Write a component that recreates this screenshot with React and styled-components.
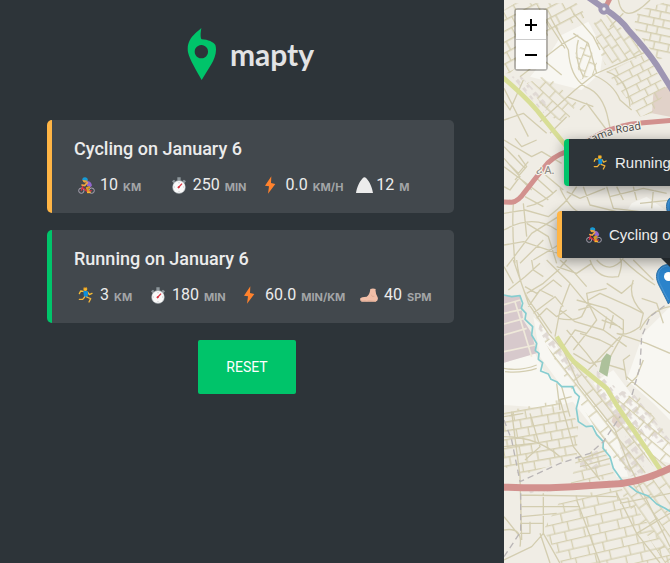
import React from 'react';
import styled, { createGlobalStyle } from 'styled-components';

const GlobalStyle = createGlobalStyle`
  * { box-sizing: border-box; margin: 0; padding: 0; }
  body { font-family: Roboto, "Noto Sans", sans-serif; color: #ececec; background: #2d3439; }
`;

const Page = styled.div`
  display: flex;
  min-height: 100vh;
`;

const Sidebar = styled.aside`
  flex: 0 0 504px;
  padding: 28px 50px 40px 47px;
  background: #2d3439;
`;

const Brand = styled.header`
  display: flex;
  justify-content: center;
  align-items: center;
  gap: 13px;
  height: 52px;
  margin-bottom: 40px;
`;

const BrandName = styled.h1`
  font: 700 30px/36px Lato, sans-serif;
  color: #e2e3e4;
`;

const WorkoutList = styled.ul`
  display: grid;
  gap: 17px;
  list-style: none;
`;

const Workout = styled.li`
  padding: 16px 18px 15px 22px;
  border-left: 5px solid ${(p) => p.$accent};
  border-radius: 5px;
  background: #42484d;
`;

const WorkoutTitle = styled.h2`
  font: 500 18px/26px Roboto, sans-serif;
  margin-bottom: 10px;
`;

const Details = styled.div`
  display: grid;
  grid-template-columns: ${(p) => p.$columns};
  column-gap: 15px;
  padding: 0 2px 0 4px;
`;

const Detail = styled.div`
  display: flex;
  align-items: center;
  height: 26px;
  white-space: nowrap;
`;

const DetailIcon = styled.span`
  display: flex;
  flex: 0 0 ${(p) => p.$width}px;
`;

const Value = styled.span`
  font: 400 16px/24px Roboto, sans-serif;
  margin-right: 5px;
`;

const Unit = styled.span`
  font: 700 11px/20px Inter, sans-serif;
  color: #a3a5a7;
  padding-top: 3px;
  text-transform: uppercase;
`;

const Actions = styled.div`
  display: flex;
  justify-content: center;
  padding: 17px 7px 0 0;
`;

const ResetButton = styled.button`
  padding: 18px 28px;
  border: 0;
  border-radius: 2px;
  background: #00c46a;
  color: #fff;
  font: 400 14px/18px Roboto, sans-serif;
  cursor: pointer;
`;

const MapArea = styled.main`
  position: relative;
  flex: 1;
  min-width: 0;
  overflow: hidden;
  background: #f0ede5;
`;

const MapCanvas = styled.svg`
  position: absolute;
  inset: 0;
  width: 100%;
  height: 100%;
`;

const ZoomControl = styled.div`
  position: absolute;
  top: 8px;
  left: 10px;
  border: 2px solid rgba(0, 0, 0, 0.25);
  border-radius: 4px;
  background-clip: padding-box;
`;

const ZoomButton = styled.button`
  display: flex;
  align-items: center;
  justify-content: center;
  width: 30px;
  height: 29px;
  border: 0;
  background: #fff;
  color: #000;
  cursor: pointer;
  & + & { border-top: 1px solid #ccc; height: 30px; }
`;

const Popup = styled.div`
  position: absolute;
  top: ${(p) => p.$top}px;
  left: ${(p) => p.$left}px;
  display: flex;
  align-items: center;
  gap: 7px;
  height: 47px;
  padding: 0 24px;
  border-left: 5px solid ${(p) => p.$accent};
  border-radius: 4px;
  background: #2d3439;
  box-shadow: 0 3px 14px rgba(0, 0, 0, 0.4);
  font: 400 15px/20px "Liberation Sans", sans-serif;
  white-space: nowrap;
`;

const Marker = styled.svg`
  position: absolute;
  top: ${(p) => p.$top}px;
  left: ${(p) => p.$left}px;
`;

const Pointer = styled.span`
  position: absolute;
  top: 249px;
  left: 160px;
  width: 17px;
  height: 17px;
  background: #2d3439;
  transform: rotate(45deg);
`;

const LogoMark = () => (
  <svg width="30" height="52" viewBox="0 0 90 156" aria-hidden="true">
    <path fill="#00c46a" fillRule="evenodd" d="M43 0 C40 18 40 31 44 34 C64 35 79 42 85 51 C91 70 83 91 73 109 L44 156 C29 129 8 96 3 73 C-1 49 9 31 25 16 C32 9 38 6 43 0Z M43 51 a20 20 0 1 0 .1 0Z" />
  </svg>
);

const Cyclist = ({ size = 17 }) => (
  <svg width={size} height={size} viewBox="0 0 51 51" fill="none" aria-hidden="true">
    <circle cx="10" cy="41" r="8" stroke="#a9a3b2" strokeWidth="3" />
    <circle cx="41" cy="41" r="8" stroke="#a9a3b2" strokeWidth="3" />
    <path d="M10 41 L15 25 M12 31 L27 43 L41 41" stroke="#dd2e44" strokeWidth="4" />
    <path d="M25 12 Q39 11 42 25 L38 31 L27 27Z" fill="#9266cc" />
    <path d="M28 17 L20 26 L12 24" stroke="#f2a742" strokeWidth="5" strokeLinecap="round" />
    <path d="M36 30 L27 33 L32 44" stroke="#d99725" strokeWidth="7" strokeLinejoin="round" />
    <path d="M27 46 H38" stroke="#ffb52e" strokeWidth="5" />
    <circle cx="21" cy="10" r="7" fill="#e8a33d" />
    <path d="M12 8 Q14 0 22 1 Q31 3 29 11Z" fill="#169bd7" />
  </svg>
);

const Runner = ({ size = 16 }) => (
  <svg width={size} height={size} viewBox="0 0 48 48" fill="none" aria-hidden="true">
    <path d="M20 14 L8 12 L4 20 M29 15 L34 23 L42 19" stroke="#f8bd35" strokeWidth="4" strokeLinecap="round" strokeLinejoin="round" />
    <path d="M16 12 Q24 9 30 14 L29 30 L18 30Z" fill="#0d8edb" />
    <path d="M20 30 L14 37 L4 37 M26 30 L38 35 L33 45" stroke="#f2b33b" strokeWidth="4" strokeLinecap="round" strokeLinejoin="round" />
    <circle cx="22" cy="6" r="6" fill="#f5b52c" />
    <path d="M15 5 Q17 -1 24 0 L27 4 Q21 1 15 5Z" fill="#9c6b2b" />
  </svg>
);

const Stopwatch = () => (
  <svg width="16" height="17" viewBox="0 0 48 51" aria-hidden="true">
    <path d="M19 1 H29 V11 H19Z M3 13 L9 8 L13 12 L7 18Z M34 12 L39 8 L45 13 L41 18Z" fill="#8d969b" />
    <circle cx="24" cy="30" r="20" fill="#b8bdc0" />
    <circle cx="24" cy="30" r="18" fill="#fafafa" />
    <path d="M24 15 V19 M24 42 V46 M8 30 H12 M36 30 H40" stroke="#b1b5b8" strokeWidth="2" />
    <path d="M21 33 L33 20" stroke="#dc3340" strokeWidth="4" />
    <circle cx="23" cy="31" r="3" fill="#d3323f" />
  </svg>
);

const Bolt = () => (
  <svg width="12" height="18" viewBox="0 0 36 54" aria-hidden="true">
    <path d="M22 1 L3 29 L15 31 L12 53 L34 24 L21 21Z" fill="#ff822d" />
  </svg>
);

const Hill = () => (
  <svg width="17" height="16" viewBox="0 0 51 48" aria-hidden="true">
    <path d="M0 48 C2 33 10 14 20 4 Q25 -3 31 4 C41 14 49 33 51 48Z" fill="#ececec" />
  </svg>
);

const Foot = () => (
  <svg width="18" height="14" viewBox="0 0 54 42" aria-hidden="true">
    <path d="M31 3 Q39 0 47 3 Q45 15 53 28 Q56 38 47 41 H5 Q-1 38 1 31 Q4 27 20 26 Q29 21 31 3Z" fill="#f2bfa8" />
    <path d="M34 20 Q35 28 43 25" fill="none" stroke="#d8a48e" strokeWidth="2" />
    <path d="M2 37 Q8 40 14 38 Q21 41 26 38 L48 40" fill="none" stroke="#dba68f" strokeWidth="2" />
  </svg>
);

const Sign = ({ plus }) => (
  <svg width="14" height="14" viewBox="0 0 14 14" stroke="currentColor" strokeWidth="2" aria-hidden="true">
    <path d={plus ? 'M1 7 H13 M7 1 V13' : 'M1 7 H13'} />
  </svg>
);

const Pin = ({ top, left }) => (
  <Marker $top={top} $left={left} width="25" height="41" viewBox="0 0 25 41" aria-hidden="true">
    <path d="M12.5 .5 C5 .5 .5 6 .5 12.5 C.5 18 4 23 7 29 L12.5 40 L18 29 C21 23 24.5 18 24.5 12.5 C24.5 6 20 .5 12.5 .5Z" fill="#2b83cb" stroke="#3273a6" />
    <path d="M12.5 2 C6 2 2 6.5 2 12.5 C2 18 6 23 8 28 L12.5 36" fill="none" stroke="#4b97d3" />
    <circle cx="12.5" cy="12.5" r="4.5" fill="#fff" />
  </Marker>
);

/* Street blocks: outline of each quarter and the direction of its grid */
const quarters = [
  { id: 'north', angle: 56, w: 44, h: 22, area: 'M280 70 L320 45 L440 150 L410 175 L315 195 L290 130Z' },
  { id: 'northeast', angle: 12, w: 38, h: 23, area: 'M415 30 L520 0 V160 L475 180 L430 120 L400 80Z' },
  { id: 'centre', angle: -27, w: 43, h: 24, area: 'M320 215 L440 160 L500 270 L455 340 L420 350Z' },
  { id: 'northwest', angle: -28, w: 42, h: 29, area: 'M12 30 L45 10 L230 10 L260 50 L150 100 L30 220 L12 220Z' },
  { id: 'west', angle: 43, w: 46, h: 28, area: 'M80 250 L140 225 L230 310 L200 370 L150 350Z' },
  { id: 'inner', angle: -70, w: 38, h: 24, area: 'M225 160 L260 120 L290 190 L280 225 L240 240Z' },
  { id: 'southwest', angle: -10, w: 42, h: 26, area: 'M12 1235 L175 1200 L235 1265 L230 1370 L70 1425 L12 1400Z' },
  { id: 'south', angle: -13, w: 52, h: 28, area: 'M185 1495 L360 1460 L510 1660 V1700 H190 L130 1590Z' },
  { id: 'southeast', angle: 55, w: 48, h: 28, area: 'M355 1465 L520 1410 V1700 H500Z' },
  { id: 'river', angle: 52, w: 50, h: 33, area: 'M120 1000 L170 1030 L240 1110 L330 1190 L460 1400 L420 1430 L350 1390 L210 1160Z' },
  { id: 'east', angle: 40, w: 48, h: 30, area: 'M345 1200 L410 1180 L520 1330 V1390 L480 1405Z' },
  { id: 'mid', angle: -14, w: 48, h: 28, area: 'M230 1370 L310 1340 L345 1430 L210 1460Z' },
];

const streets = `M150 50 L205 150 Q210 230 255 260 Q310 280 325 360 L335 405 M140 60 L195 145 M60 230 L190 130 L235 105 M120 365 L225 270 L285 222 L440 155
M12 360 L70 340 L140 400 M12 265 L85 410 M70 240 L30 330 L10 300 M220 40 L280 110 L300 150 M220 100 L265 130 L290 220 M280 225 Q340 250 360 300 L395 330
M320 215 Q385 235 390 320 M355 0 Q370 80 450 0 M330 80 L370 40 M185 225 L130 180 M200 290 L280 320 M240 330 L260 310 L320 390 M150 400 L200 350 M235 120 Q220 170 250 230
M12 420 L95 470 L125 455 L185 490 M12 440 L75 505 M12 475 L60 530 L30 570 L12 560 M12 500 L145 600 M45 415 L65 440 L110 420 M55 465 L80 500 L45 540 M30 495 L55 520 L85 485 M65 540 L95 570 M130 520 L190 570 M105 530 L160 580 M75 590 L130 620 M40 610 Q35 690 45 790 M70 610 L80 710
M12 640 L75 630 L145 650 Q200 610 230 560 M80 620 Q130 610 170 570 M12 690 Q100 640 170 690 M12 735 L70 725 L175 760 M80 670 L145 710 L170 790 M20 800 L95 700 L175 650 M60 790 L130 720 M100 780 L175 735
M180 565 Q210 630 245 640 M200 575 L240 595 L315 565 M250 560 L270 615 L350 635 M320 560 L340 625 L420 635 M330 590 L430 565 L500 580 M350 560 L370 600 M400 560 L410 600 M420 610 L515 600 M460 570 L455 625
M40 780 L85 910 L145 1000 L190 1050 L235 1150 L345 1290 L385 1390 L510 1640 M50 780 Q60 870 100 920 L155 1000 M12 800 L40 850 M25 870 L75 830 L120 790 M80 880 L130 850 L175 810 L200 780 M95 780 L100 810 L130 830 M75 860 L110 880 L160 840 L185 860
M85 920 L120 870 L160 890 M100 940 L165 890 L190 920 M110 955 L140 925 L170 950 L200 930 M140 780 L210 850 L260 910 L370 990 M180 780 L225 820 L260 860 M170 800 L230 820 L275 790 M210 850 L180 930 L165 1010 M180 930 L225 965 L310 990 L380 1040 M175 955 Q220 965 245 950 L265 910 L260 880 L320 865
M270 780 Q290 840 355 830 Q370 790 360 775 M290 780 Q330 825 370 775 M320 850 L365 880 L400 850 M370 780 Q410 820 465 855 M400 780 L460 840 M400 840 Q380 890 430 940 L420 980 Q380 1010 350 1000 M425 895 L470 910 L490 970 M420 990 Q450 930 510 920 M350 1000 L440 1030 L510 1060
M265 900 L300 880 L390 920 L430 940 M235 930 L270 920 L290 960 L260 1000 L220 1050 M230 900 L320 925 L370 960 L370 1000 L320 1090 M305 960 L360 980 M320 950 L310 990 M340 945 L330 985 M240 1000 L300 1020 L340 1040 M200 990 L260 1060 L290 1100 M190 1040 L225 990 L260 1000 M220 1060 L270 1090 L320 1080 M265 1110 L360 1010 M310 1090 L375 1110 L380 1140 M375 1110 L370 1080 L390 1065 M380 1130 L510 1240 M430 1080 L410 1130 L380 1160
M12 1105 Q60 1115 110 1095 M15 1115 Q65 1120 110 1105 M170 1150 L180 1230 M185 1160 L210 1250 M175 1200 L215 1190
M12 1250 L70 1240 M35 1235 L60 1430 L65 1620 M12 1310 Q110 1310 180 1370 M12 1340 L100 1330 M90 1240 L120 1340 L75 1380 M180 1200 L220 1340 L300 1440 M235 1380 L320 1350 M240 1400 L330 1375
M12 1590 Q70 1580 60 1640 M12 1550 L60 1610 M12 1680 L95 1640 L130 1600 L180 1690 M120 1600 L150 1689 M60 1485 L350 1490 M65 1520 H240 M65 1550 L170 1540 M130 1480 V1600 M60 1570 H130 M90 1565 V1600 H60 M230 1500 L300 1689 M350 1480 L410 1600 L480 1689 M410 1600 L510 1540 M360 1510 L510 1480`;

const CityMap = () => (
  <MapCanvas viewBox="12 0 498 1689" preserveAspectRatio="xMinYMin slice" role="img" aria-label="City map">
    <defs>
      {quarters.map((q) => (
        <pattern key={q.id} id={q.id} width={q.w * 2} height={q.h * 2} patternUnits="userSpaceOnUse" patternTransform={`rotate(${q.angle})`}>
          <path d={`M0 2 H${q.w * 2} M0 ${q.h + 2} H${q.w * 2} M8 2 V${q.h + 2} M${q.w} 2 V${q.h + 2} M${q.w - 14} ${q.h + 2} V${q.h * 2 + 2} M${q.w * 2 - 8} ${q.h + 2} V${q.h * 2 + 2}`} stroke="#d5cfb1" strokeWidth="4" fill="none" />
        </pattern>
      ))}
      <pattern id="houses" width="31" height="25" patternUnits="userSpaceOnUse" patternTransform="rotate(52)">
        <path d="M3 3 H16 V9 H24 V16 H12 V22 H3Z" fill="#e0d9d4" />
      </pattern>
      <path id="road-label" d="M253 441 Q310 410 352 400 L435 385" />
    </defs>
    <path d="M185 105 L265 65 L310 150 L300 220 L245 270 L90 230 L150 160Z M395 610 L440 590 L510 640 V700 L370 650Z" fill="#f8f7f2" />
    <path d="M12 1088 L105 1060 L130 1110 L180 1155 L235 1200 L150 1225 L12 1215Z M100 950 L150 1000 L230 1150 L345 1290 L385 1430 L350 1430 L300 1310 L230 1220 L120 1070Z M510 920 L430 1000 L380 1140 L460 1210 L510 1260Z M340 1110 L280 1150 L440 1370 L510 1390 V1340 L400 1190Z" fill="#f8f7f2" />
    <path d="M12 887 L60 890 L70 960 L95 1000 L110 1060 L12 1088Z" fill="#d7c9cc" />
    <path d="M12 914 L60 900 M12 940 L68 928 M12 972 L72 956 M12 1005 L80 985 M12 1055 L105 1035 M45 905 L95 1070" stroke="#efe9da" strokeWidth="5" />
    <path d="M460 280 L510 255 V350 L456 340Z M340 1245 L360 1235 L380 1260 L355 1285 L335 1265Z" fill="#e1d2c9" />
    <path d="M35 230 L60 225 L150 320 L130 340Z M120 970 L170 1020 L240 1130 L200 1120 L115 990Z M290 1110 L345 1160 L440 1310 L430 1420 L390 1430 L350 1370 L380 1300 L290 1180Z M350 1170 L400 1180 L510 1320 L470 1330Z M235 1370 L295 1350 L300 1405 L245 1415Z M85 1465 L400 1435 L405 1450 L90 1480Z" fill="url(#houses)" />
    {quarters.map((q) => <path key={q.id} d={q.area} fill={`url(#${q.id})`} />)}
    <path d={streets} fill="none" stroke="#d3cdb0" strokeWidth="4" strokeLinejoin="round" />
    <path d="M320 1060 L334 1068 L322 1130 L297 1115 L305 1080Z" fill="#adc19b" />
    <path d="M12 885 L35 890 L60 887 L68 910 L64 925 L78 940 L75 958 L98 980 L95 1005 L110 1030 L106 1052 L117 1060 L115 1078 L128 1088 L122 1113 L145 1122 L153 1138 L170 1145 L185 1160 L218 1160 L225 1178 L238 1190 L229 1225 L235 1265 L258 1280 L277 1278 L290 1304 L310 1325 L309 1345 L330 1370 L340 1405 L365 1440 L395 1463 L410 1475 L445 1488 L470 1512 L495 1525 L512 1535" fill="none" stroke="#86cdd0" strokeWidth="5" strokeLinejoin="round" />
    <path d="M12 1260 L35 1320 L60 1445 L180 1390 L270 1360 L310 1325 L360 1250 M62 1480 V1595 L12 1670 M396 1185 L420 1100 L425 1010 L450 950 L510 905" fill="none" stroke="#b9b5b6" strokeWidth="4" strokeDasharray="19 12" />
    <g fill="none">
      <path d="M0 225 Q90 300 130 355 L200 440 M170 1010 Q205 1070 225 1088 L320 1165 L350 1215 L485 1415" stroke="#d8de96" strokeWidth="14" />
      <path d="M0 605 L35 607 Q55 605 75 575 L130 505 Q155 470 200 455 Q250 430 300 402 Q350 375 430 368 L520 361 M315 25 L330 -5" stroke="#d2918e" strokeWidth="15" />
      <path d="M0 1461 Q150 1467 250 1458 L330 1453 Q420 1450 520 1400" stroke="#d2918e" strokeWidth="21" />
      <path d="M255 -15 L312 25 Q365 60 385 90 Q440 150 470 195 L520 275" stroke="#9e96b3" strokeWidth="18" />
    </g>
    <circle cx="312" cy="27" r="17" fill="#9e96b3" />
    <circle cx="312" cy="27" r="5" fill="#eee" />
    <g fontFamily="Noto Sans, sans-serif" stroke="#f5f2ea" strokeWidth="7" paintOrder="stroke" strokeLinejoin="round">
      <text fontSize="32" fill="#4c4c4c"><textPath href="#road-label">mama Road</textPath></text>
      <text x="107" y="521" fontSize="33" fill="#8b8883">ሪ A.</text>
    </g>
  </MapCanvas>
);

const workouts = [
  {
    title: 'Cycling on January 6', accent: '#ffb545', columns: 'repeat(4, minmax(0, 1fr))',
    details: [
      { icon: <Cyclist />, width: 22, value: '10', unit: 'km' },
      { icon: <Stopwatch />, width: 22, value: '250', unit: 'min' },
      { icon: <Bolt />, width: 22, value: '0.0', unit: 'km/h' },
      { icon: <Hill />, width: 20, value: '12', unit: 'm' },
    ],
  },
  {
    title: 'Running on January 6', accent: '#00c46a', columns: '57px 78px 102px 1fr',
    details: [
      { icon: <Runner />, width: 22, value: '3', unit: 'km' },
      { icon: <Stopwatch />, width: 22, value: '180', unit: 'min' },
      { icon: <Bolt />, width: 22, value: '60.0', unit: 'min/km' },
      { icon: <Foot />, width: 24, value: '40', unit: 'spm' },
    ],
  },
];

export default function App() {
  return (
    <Page>
      <GlobalStyle />
      <Sidebar>
        <Brand><LogoMark /><BrandName>mapty</BrandName></Brand>
        <WorkoutList>
          {workouts.map((w) => (
            <Workout key={w.title} $accent={w.accent}>
              <WorkoutTitle>{w.title}</WorkoutTitle>
              <Details $columns={w.columns}>
                {w.details.map((d) => (
                  <Detail key={d.unit}>
                    <DetailIcon $width={d.width}>{d.icon}</DetailIcon>
                    <Value>{d.value}</Value>
                    <Unit>{d.unit}</Unit>
                  </Detail>
                ))}
              </Details>
            </Workout>
          ))}
        </WorkoutList>
        <Actions><ResetButton type="button">RESET</ResetButton></Actions>
      </Sidebar>
      <MapArea>
        <CityMap />
        <Pin top={194} left={162} />
        <Pin top={264} left={152} />
        <Popup $top={139} $left={60} $accent="#00c46a"><Runner size={15} />Running on January 6</Popup>
        <Pointer />
        <Popup $top={211} $left={53} $accent="#ffb545"><Cyclist size={16} />Cycling on January 6</Popup>
        <ZoomControl>
          <ZoomButton type="button" aria-label="Zoom in"><Sign plus /></ZoomButton>
          <ZoomButton type="button" aria-label="Zoom out"><Sign /></ZoomButton>
        </ZoomControl>
      </MapArea>
    </Page>
  );
}
